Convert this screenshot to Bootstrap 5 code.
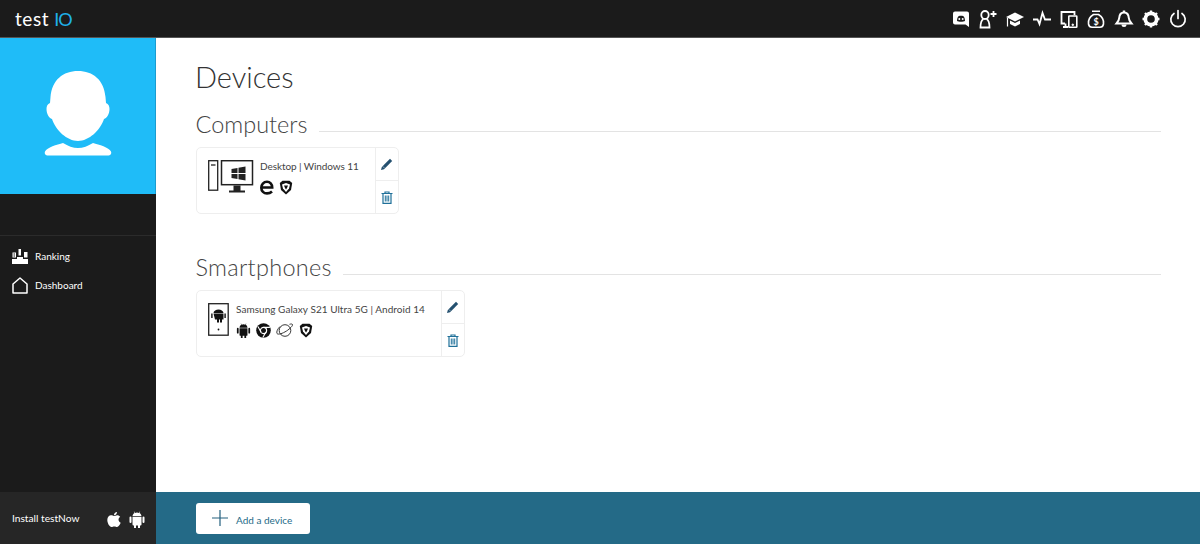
<!DOCTYPE html>
<html lang="en"><head><meta charset="utf-8"><title>Devices</title>
<link href="https://cdn.jsdelivr.net/npm/bootstrap@5.3.0/dist/css/bootstrap.min.css" rel="stylesheet">
<style>
html,body{height:544px;overflow:hidden;background:#fff;font-family:"Lato","Open Sans",sans-serif}
.appframe{height:544px}
.topbar{height:38px;background:#1b1b1b;border-bottom:1px solid #555;padding:0 12px 0 15px}
.logo-txt{font-family:"Lato",sans-serif;font-size:19px;color:#fff;letter-spacing:.6px;line-height:1}
.logo-io{color:#1fb0e8;margin-left:5px;letter-spacing:-1px;font-size:18px}
.top-ic{gap:7.2px}
.top-ic svg{width:20px;height:20px;display:block}
.sidewrap{width:156px;background:#1b1b1b;flex:none}
.avatar{height:156px;background:#1fbcf8;border-right:1px solid #1b9ccf}
.avatar svg{width:70px;height:90px}
.side-gap{height:42px;border-bottom:1px solid #2b2b2b}
.side-link{height:29px;padding-left:12px;gap:7px;color:#fff;font-size:10px;text-decoration:none}
.side-link svg{width:16px;height:17px}
.side-list{padding-top:2px}
.side-foot{height:52px;background:#262626;color:#fff;font-size:10.2px;padding:2px 11px 0 12px}
.main-col{min-width:0}
.content-pane{padding:18px 39px 0 40px}
.page-h{font-size:29px;font-weight:300;color:#333;line-height:41px;margin:0 0 12px -1px}
.sect-h{font-size:23.5px;font-weight:300;color:#444;line-height:30px;margin:0 0 0 -.5px;white-space:nowrap}
.sect-wide{letter-spacing:.3px}
.sect-line{height:1px;background:#e3e3e3;margin:15px 0 0 11px}
.dev-box{border:1px solid #eee;border-radius:5px;height:67px}
.dev-info{padding:12px 16px 0 11px;gap:6px}
.phone-info{gap:7px}
.dev-name{font-size:10px;color:#444;line-height:14px;white-space:nowrap;letter-spacing:.04px;margin-top:-1px}
.dev-tight{letter-spacing:-.08px}
.dev-sub{gap:5px;margin-top:7px}
.dev-act{width:23px;border-left:1px solid #eee}
.dev-act>div{flex:1 1 0}
.dev-act>div+div{border-top:1px solid #eee}
.sect2{margin-top:38px}
.foot-bar{height:52px;background:#246a87;padding-left:40px}
.add-btn{width:114px;height:31px;background:#fff;border-radius:3px;color:#246a87;font-size:10px;gap:8px;padding:0 0 0 16px;border:0}
.add-lbl{padding-top:4px}
</style></head><body>
<div class="appframe d-flex flex-column">
<header class="topbar d-flex align-items-center justify-content-between flex-none">
<div class="logo-txt">test<span class="logo-io">IO</span></div>
<div class="top-ic d-flex align-items-center">
<svg viewBox="0 0 20 20"><path fill="#fff" fill-rule="evenodd" d="M4 2.500h12a2 2 0 0 1 2 2v13.500l-3.500-2.500H4a2 2 0 0 1-2-2V4.500a2 2 0 0 1 2-2zM6 12c1.500 1 6.500 1 8 0 0-2-.7-4.300-1.500-4.800-1.500-.5-3.500-.5-5 0C6.700 7.700 6 10 6 12z"/><circle cx="8.300" cy="10" r="1" fill="#fff"/><circle cx="11.700" cy="10" r="1" fill="#fff"/></svg>
<svg viewBox="0 0 20 20" fill="none" stroke="#fff" stroke-width="1.800"><ellipse cx="7" cy="6" rx="3.700" ry="4"/><path d="M5.500 10C3.500 11 2.500 14 2.500 18.500h9C11.500 14 10.500 11 8.500 10"/><path d="M15.500 2v6M12.500 5h6"/></svg>
<svg viewBox="0 0 20 20"><path fill="#fff" d="M10 3.500 19 8 10 12.500 1 8z"/><path fill="#fff" d="M5 11.500l5 2.500 5-2.500v3.500l-5 2.500-5-2.500z"/><path stroke="#fff" stroke-width="1.200" d="M2.500 9v8.500"/></svg>
<svg viewBox="0 0 20 20" fill="none" stroke="#fff" stroke-width="1.800"><path d="M1 10.500h4.500l2 4.500 3-11 2.500 6.500h6"/></svg>
<svg viewBox="0 0 20 20" fill="none" stroke="#fff"><path d="M6 14.500H2.500V3h13v3M4 18h5M6.500 14.500V18" stroke-width="1.800"/><rect x="9.800" y="7" width="8" height="11.200" rx=".5" stroke-width="1.600"/><circle cx="13.800" cy="15.800" r=".8" fill="#fff"/></svg>
<svg viewBox="0 0 20 20" fill="none" stroke="#fff" stroke-width="1.600"><path d="M6 2.200h8M7.500 5.500h5c4 2.500 5.500 6 5 9.500-.4 2-1.800 3.200-3.500 3.200H6c-1.700 0-3.100-1.200-3.500-3.200-.5-3.500 1-7 5-9.500z"/><text x="10" y="15.500" fill="#fff" stroke="none" font-size="9" font-weight="700" text-anchor="middle" font-family="Lato">$</text></svg>
<svg viewBox="0 0 20 20"><path fill="none" stroke="#fff" stroke-width="2" d="M10 3.500c3.300 0 4.600 2.500 4.800 5.500.1 2 1 3.500 2.700 5.500h-15C4.200 12.500 5.100 11 5.200 9c.2-3 1.500-5.500 4.800-5.500z"/><path fill="#fff" d="M8.800 1.500h2.400v2.500H8.800zM7.500 15.500h5a2.500 2.500 0 0 1-5 0z"/></svg>
<svg viewBox="0 0 20 20"><circle cx="10" cy="10" r="5.700" fill="none" stroke="#fff" stroke-width="3.800"/><g stroke="#fff" stroke-width="2.400"><path d="M10 1.500v2M10 16.500v2M1.500 10h2M16.500 10h2M4 4l1.500 1.500M14.500 14.500 16 16M16 4l-1.500 1.500M5.500 14.500 4 16"/></g></svg>
<svg viewBox="0 0 20 20" fill="none" stroke="#fff" stroke-width="1.700" stroke-linecap="round"><path d="M6 4.500a7.200 7.200 0 1 0 8 0"/><path d="M10 1.500v8"/></svg>
</div>
</header>
<div class="d-flex flex-grow-1" style="min-height:0">
<aside class="sidewrap d-flex flex-column">
<div class="avatar d-flex align-items-center justify-content-center">
<svg viewBox="0 0 70 90"><path fill="#fff" d="M35 0c15 0 26 9 27.500 26l.5 6c2.500 1 3.500 3 3.500 6 0 5-2.500 9-5.500 10-3.500 11-15 22-26 22S12.500 59 9 48c-3-1-5.500-5-5.500-10 0-3 1-5 3.500-6l.5-6C9 9 20 0 35 0z"/><path fill="#fff" d="M20 72c5 3 10 5 15 5s10-2 15-5c6 1.500 16 4.500 18 8.500 1 2.500-1 4-3 4H5c-2 0-4-1.500-3-4 2-4 12-7 18-8.500z"/></svg>
</div>
<div class="side-gap"></div>
<div class="side-list flex-grow-1">
<a class="side-link d-flex align-items-center mt-1" href="#"><svg viewBox="0 0 16 17"><path fill="#fff" d="M0 11h5V9h6v2h5v5H0z"/><path fill="#fff" fill-rule="evenodd" d="M.5 4.500h3.500v5H.5zM1.500 5.500v1h1.500v-1zM1.500 7.500v1h1.500v-1z"/><path fill="#fff" d="M6.500 1H9v6.500H6.500zM12 4h3.500v5.500H12z"/></svg>Ranking</a>
<a class="side-link d-flex align-items-center" href="#"><svg viewBox="0 0 16 17" fill="none" stroke="#fff" stroke-width="1.500" stroke-linejoin="round"><path d="M1 7 8 1l7 6v9H1z"/></svg>Dashboard</a>
</div>
<div class="side-foot d-flex align-items-center justify-content-between">
<span>Install testNow</span>
<span class="d-flex gap-2 align-items-center">
<svg width="14" height="16" viewBox="0 0 14 16"><path fill="#fff" d="M10 1c.2 1.500-1.300 3.300-3 3.200C6.800 2.700 8.500 1 10 1zM7 5c.8 0 1.800-.8 3.200-.8 1.200 0 2.300.6 3 1.600-2.500 1.500-2 5 .5 6-.8 2-2.200 4.200-3.600 4.200-1 0-1.500-.6-2.800-.6s-1.800.6-2.800.6C2.500 16 .3 12 .3 9 .3 6 2.200 4.300 4 4.300 5.300 4.300 6.200 5 7 5z"/></svg>
<svg width="16" height="17" viewBox="0 0 16 17"><path fill="#fff" d="M3.500 6h9v7.500a1 1 0 0 1-1 1H11V17H9v-2.500H7V17H5v-2.500h-.500a1 1 0 0 1-1-1zM.5 6.500a1 1 0 0 1 2 0v4.500a1 1 0 0 1-2 0zM13.500 6.500a1 1 0 0 1 2 0v4.500a1 1 0 0 1-2 0zM3.500 5.300C3.600 3.800 4.500 2.700 5.500 2.100L4.800.8l.4-.2.8 1.300a5 5 0 0 1 4 0l.8-1.300.4.200-.7 1.300c1 .6 1.900 1.700 2 3.200z"/></svg>
</span>
</div>
</aside>
<div class="main-col d-flex flex-column flex-grow-1">
<main class="content-pane flex-grow-1">
<h1 class="page-h">Devices</h1>
<div class="d-flex align-items-center"><h2 class="sect-h">Computers</h2><div class="sect-line flex-grow-1"></div></div>
<div class="dev-box d-inline-flex mt-2">
<div class="dev-info d-flex">
<svg width="46" height="33" viewBox="0 0 46 33" fill="none" stroke="#222"><rect x=".7" y=".7" width="9" height="29.500" stroke-width="1.300"/><path d="M3 5h4.500" stroke-width="1.300"/><rect x="13.500" y=".7" width="31" height="24" stroke-width="1.500"/><path fill="#222" stroke="none" d="M21 32.500h16v-2h-4.500v-5h-7v5H21zM23.500 9l6-1v5h-6zM30.500 7.800l7-1.200v6.400h-7zM23.500 14h6v5l-6-1zM30.500 14h7v6.400l-7-1.200z"/></svg>
<div>
<div class="dev-name dev-tight">Desktop | Windows 11</div>
<div class="dev-sub d-flex align-items-center">
<svg width="14" height="15" viewBox="0 0 14 15"><path fill="none" stroke="#111" stroke-width="2.600" d="M2 7.500h10.200C12.200 4 10 1.800 7 1.800 3.500 1.800 1.300 4.500 1.300 7.700c0 3.500 2.500 5.700 5.700 5.700 2 0 3.700-.7 5-1.900"/></svg>
<svg width="14" height="15" viewBox="0 0 14 15"><path fill="#111" d="M3.500.8h7L13.200 3 12 10 7 14.500 2 10 .8 3z"/><path fill="#fff" d="M3 4.500 7 3l4 1.500-1 4L7 12 4 8.500z"/><path fill="#111" d="M5 5.500h4L8 8l-1 1.500L6 8z"/></svg>
</div>
</div>
</div>
<div class="dev-act d-flex flex-column">
<div class="d-flex align-items-center justify-content-center"><svg width="13" height="13" viewBox="0 0 13 13"><path fill="#24506f" d="M10 .8l2.200 2.200L4 11.200 1 12l.8-3z"/><path stroke="#fff" stroke-width=".5" d="M2.800 8.400l1.800 1.800"/></svg></div>
<div class="d-flex align-items-center justify-content-center"><svg width="12" height="13" viewBox="0 0 12 13" fill="none" stroke="#1f7099"><path d="M.5 2.500h11M4 2.500V1h4v1.500M2 2.500V12.300h8V2.500" stroke-width="1.200"/><path d="M4.300 4.500v6M6 4.500v6M7.700 4.500v6" stroke-width="1"/></svg></div>
</div>
</div>
<div class="sect2 d-flex align-items-center"><h2 class="sect-h sect-wide">Smartphones</h2><div class="sect-line flex-grow-1"></div></div>
<div class="dev-box d-inline-flex mt-2">
<div class="dev-info phone-info d-flex">
<svg width="21" height="33" viewBox="0 0 21 33"><rect x=".7" y=".7" width="19.500" height="31.500" fill="none" stroke="#222" stroke-width="1.300"/><path fill="#111" d="M5.500 10.500h10v6h-1.500v3h-2v-3h-1v3h-2v-3H7zM5.500 10c.2-2 2.500-3.500 5-3.500s4.800 1.500 5 3.500zM3.200 10.500h1.400v4.500H3.200zM16.400 10.500h1.400v4.500h-1.400z"/><circle cx="10.500" cy="26.500" r=".9" fill="#111"/></svg>
<div>
<div class="dev-name">Samsung Galaxy S21 Ultra 5G | Android 14</div>
<div class="dev-sub d-flex align-items-center">
<svg width="15" height="15" viewBox="0 0 16 17"><path fill="#111" d="M3.500 6h9v7.500a1 1 0 0 1-1 1H11V17H9v-2.500H7V17H5v-2.500h-.500a1 1 0 0 1-1-1zM.5 6.500a1 1 0 0 1 2 0v4.500a1 1 0 0 1-2 0zM13.500 6.500a1 1 0 0 1 2 0v4.500a1 1 0 0 1-2 0zM3.500 5.300C3.600 3.800 4.500 2.700 5.500 2.100L4.800.8l.4-.2.8 1.300a5 5 0 0 1 4 0l.8-1.300.4.200-.7 1.300c1 .6 1.900 1.700 2 3.200z"/></svg>
<svg width="15" height="15" viewBox="0 0 15 15"><circle cx="7.500" cy="7.500" r="7.300" fill="#111"/><circle cx="7.500" cy="7.500" r="3.100" fill="#111" stroke="#fff" stroke-width="1.200"/><path stroke="#fff" stroke-width="1.100" d="M7.500 4.400h6.400M5 9l-3.100-5.400M10 9l-3.200 5.600"/></svg>
<svg width="18" height="15" viewBox="0 0 18 15" fill="none" stroke="#222" stroke-width=".9"><circle cx="9" cy="7.500" r="5.800"/><path d="M4 3.500C1.500 6 .2 9 1 10.500c1.200 1.500 5.500 0 9.500-2.500 3.500-2.300 6.500-5.300 6-6.500-.4-.7-1.700-.6-3-.2"/></svg>
<svg width="14" height="15" viewBox="0 0 14 15"><path fill="#111" d="M3.500.8h7L13.200 3 12 10 7 14.500 2 10 .8 3z"/><path fill="#fff" d="M3 4.500 7 3l4 1.500-1 4L7 12 4 8.500z"/><path fill="#111" d="M5 5.500h4L8 8l-1 1.500L6 8z"/></svg>
</div>
</div>
</div>
<div class="dev-act d-flex flex-column">
<div class="d-flex align-items-center justify-content-center"><svg width="13" height="13" viewBox="0 0 13 13"><path fill="#24506f" d="M10 .8l2.200 2.200L4 11.200 1 12l.8-3z"/><path stroke="#fff" stroke-width=".5" d="M2.800 8.400l1.800 1.800"/></svg></div>
<div class="d-flex align-items-center justify-content-center"><svg width="12" height="13" viewBox="0 0 12 13" fill="none" stroke="#1f7099"><path d="M.5 2.500h11M4 2.500V1h4v1.500M2 2.500V12.300h8V2.500" stroke-width="1.200"/><path d="M4.300 4.500v6M6 4.500v6M7.700 4.500v6" stroke-width="1"/></svg></div>
</div>
</div>
</main>
<footer class="foot-bar d-flex align-items-center">
<button type="button" class="add-btn d-flex align-items-center"><svg width="16" height="16" viewBox="0 0 16 16" stroke="#24607f" stroke-width="1.200"><path d="M8 0v16M0 8h16"/></svg><span class="add-lbl">Add a device</span></button>
</footer>
</div>
</div>
</div>
<script src="https://cdn.jsdelivr.net/npm/bootstrap@5.3.0/dist/js/bootstrap.bundle.min.js"></script>
</body></html>
